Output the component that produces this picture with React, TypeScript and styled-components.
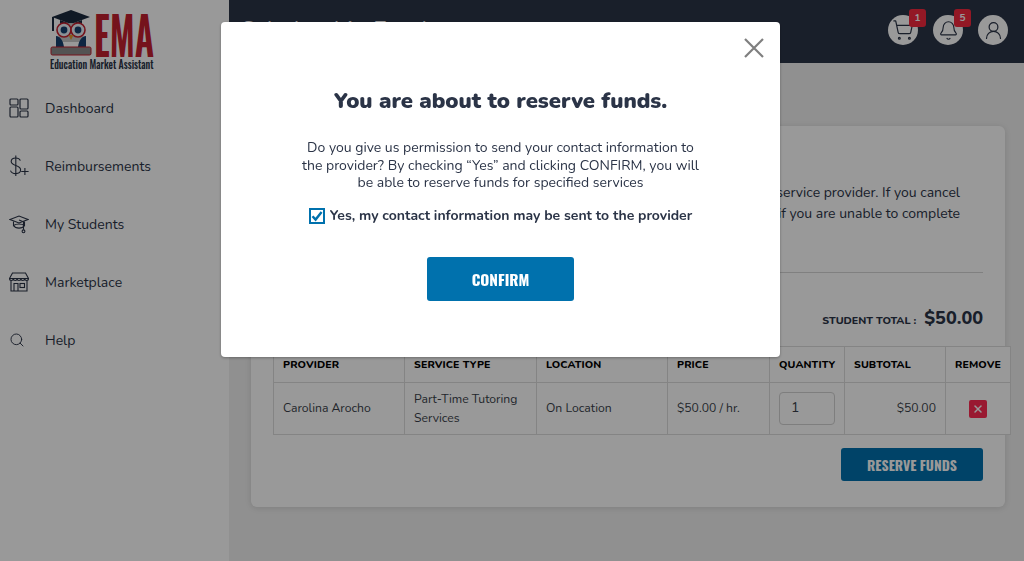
import React from "react";
import styled, { createGlobalStyle } from "styled-components";
import { Bell, Search, ShoppingCart, UserRound, X } from "lucide-react";

const BODY_FONT = `"Nunito", "Lato", "Noto Sans", sans-serif`;
const NARROW_FONT = `"Oswald", "Liberation Sans Narrow", "Liberation Sans", sans-serif`;

const GlobalStyle = createGlobalStyle`
  html, body {
    margin: 0;
    padding: 0;
    height: 100%;
    overflow: hidden;
    font-family: ${BODY_FONT};
    color: #2b3447;
  }
  * {
    box-sizing: border-box;
  }
`;

const DashboardIcon = () => (
  <svg width="20" height="20" viewBox="0 0 20 20" fill="none" stroke="#2b3447" strokeWidth="1.2">
    <rect x="1" y="1" width="8" height="6" rx="1" />
    <rect x="1" y="9" width="8" height="10" rx="1" />
    <rect x="11" y="1" width="8" height="10" rx="1" />
    <rect x="11" y="13" width="8" height="6" rx="1" />
  </svg>
);

const DollarPlusIcon = () => (
  <svg width="20" height="22" viewBox="0 0 20 22" fill="none" stroke="#2b3447" strokeWidth="1.1">
    <path d="M11.4 5.6C10.6 3.8 8.8 3 6.8 3 4.2 3 2.2 4.3 2.2 6.6c0 4.9 9.4 2.9 9.4 8.2 0 2.4-2.2 3.8-4.9 3.8-2.4 0-4.4-1-5.2-3" />
    <path d="M6.8 .5v20.5" />
    <path d="M12.2 16.5h7.4M15.9 13v7" />
  </svg>
);

const CapIcon = () => (
  <svg width="20" height="20" viewBox="0 0 20 20" fill="none" stroke="#2b3447" strokeWidth="1.1">
    <path d="M1 5.5 10 2l9 3.5L10 9z" />
    <path d="M4.5 7.5v4c3-2 8-2 11 0v-4" />
    <path d="M4.5 11.5c1 1.6 3 2.6 5.5 2.6s4.500-1 5.500-2.600" />
    <path d="M10 6l4.500 1.800v8" />
    <circle cx="14.500" cy="17.300" r="1.400" />
  </svg>
);

const StoreIcon = () => (
  <svg width="20" height="20" viewBox="0 0 20 20" fill="none" stroke="#2b3447" strokeWidth="1.1">
    <path d="M3.500 1h13L19.500 6.500H.5z" />
    <path d="M.5 6.500c0 2.600 3.800 2.600 3.800 0 0 2.600 3.800 2.600 3.800 0 0 2.600 3.800 2.600 3.800 0 0 2.600 3.800 2.600 3.800 0 0 2.600 3.800 2.600 3.800 0" />
    <path d="M2 9v10h16V9" />
    <path d="M5 19v-7.500h4V19" />
    <rect x="11" y="11.500" width="4.500" height="4" />
  </svg>
);

const OwlLogo = () => (
  <svg width="42" height="52" viewBox="0 0 42 52">
    <path d="M2 13 21 6l19 7-19 7z" fill="#1c2a3f" />
    <path d="M10 16v6c6-3 16-3 22 0v-6l-11 4z" fill="#1c2a3f" />
    <path d="M3 13v14" stroke="#1c2a3f" strokeWidth="2" />
    <path d="M9 22c7-4 17-4 24 0v16H9z" fill="#c9c9c9" />
    <path d="M6 32c4 0 7 4 8 11H6zM36 32c-4 0-7 4-8 11h8z" fill="#16406f" />
    <circle cx="14" cy="26" r="7" fill="#eaf2f8" stroke="#c4202f" strokeWidth="1.6" />
    <circle cx="28" cy="26" r="7" fill="#eaf2f8" stroke="#c4202f" strokeWidth="1.6" />
    <circle cx="14" cy="26" r="3.4" fill="#16406f" />
    <circle cx="28" cy="26" r="3.4" fill="#16406f" />
    <path d="M18.5 31h5L21 36z" fill="#e39a2d" />
    <rect x="1" y="43" width="40" height="8" rx="1.5" fill="#8b8b8b" stroke="#c4202f" strokeWidth="1" />
  </svg>
);

const NAV_ITEMS = [
  { label: "Dashboard", icon: <DashboardIcon /> },
  { label: "Reimbursements", icon: <DollarPlusIcon /> },
  { label: "My Students", icon: <CapIcon /> },
  { label: "Marketplace", icon: <StoreIcon /> },
  { label: "Help", icon: <Search size={16} strokeWidth={1.4} /> },
];

const App: React.FC = () => {
  return (
    <Page>
      <GlobalStyle />
      <Sidebar>
        <Logo>
          <LogoTop>
            <OwlLogo />
            <LogoLetters>EMA</LogoLetters>
          </LogoTop>
          <LogoTagline>Education Market Assistant</LogoTagline>
        </Logo>
        <Nav>
          {NAV_ITEMS.map((item) => (
            <NavItem key={item.label}>
              <NavIcon>{item.icon}</NavIcon>
              {item.label}
            </NavItem>
          ))}
        </Nav>
      </Sidebar>

      <Main>
        <Header>
          <HeaderTitle>Scholarship Funds</HeaderTitle>
          <HeaderIcons>
            <RoundIcon>
              <ShoppingCart size={22} strokeWidth={1.3} />
              <CountBadge>1</CountBadge>
            </RoundIcon>
            <RoundIcon>
              <Bell size={21} strokeWidth={1.3} />
              <CountBadge>5</CountBadge>
            </RoundIcon>
            <RoundIcon>
              <UserRound size={21} strokeWidth={1.4} />
            </RoundIcon>
          </HeaderIcons>
        </Header>

        <Card>
          <CardTitle>Reservation Details</CardTitle>
          <CardText>
            Funds are held once you send this reservation to your service provider. If you cancel
            <br />
            the reservation the funds are returned to your account if you are unable to complete
          </CardText>
          <CardTextEnd>the service.</CardTextEnd>
          <Divider />
          <TotalRow>
            <TotalLabel>STUDENT TOTAL :</TotalLabel>
            <TotalValue>$50.00</TotalValue>
          </TotalRow>
          <CartTable>
            <colgroup>
              <col width="131" />
              <col width="132" />
              <col width="131" />
              <col width="102" />
              <col width="75" />
              <col width="101" />
              <col width="65" />
            </colgroup>
            <thead>
              <tr>
                <HeadCell>Provider</HeadCell>
                <HeadCell>Service Type</HeadCell>
                <HeadCell>Location</HeadCell>
                <HeadCell>Price</HeadCell>
                <HeadCell>Quantity</HeadCell>
                <HeadCell>Subtotal</HeadCell>
                <HeadCell>Remove</HeadCell>
              </tr>
            </thead>
            <tbody>
              <tr>
                <BodyCell>Carolina Arocho</BodyCell>
                <BodyCell>Part-Time Tutoring Services</BodyCell>
                <BodyCell>On Location</BodyCell>
                <BodyCell>$50.00 / hr.</BodyCell>
                <BodyCell>
                  <QuantityBox>1</QuantityBox>
                </BodyCell>
                <BodyCell $right>$50.00</BodyCell>
                <BodyCell $center>
                  <RemoveButton>
                    <X size={12} strokeWidth={3} />
                  </RemoveButton>
                </BodyCell>
              </tr>
            </tbody>
          </CartTable>
          <CardActions>
            <ReserveButton>RESERVE FUNDS</ReserveButton>
          </CardActions>
        </Card>
      </Main>

      <Overlay>
        <Modal>
          <CloseButton>
            <svg width="20" height="20" viewBox="0 0 20 20" stroke="#7f7f7f" strokeWidth="2.2">
              <path d="M1 1l18 18M19 1 1 19" />
            </svg>
          </CloseButton>
          <ModalTitle>You are about to reserve funds.</ModalTitle>
          <ModalText>
            Do you give us permission to send your contact information to the provider? By checking
            “Yes” and clicking CONFIRM, you will be able to reserve funds for specified services
          </ModalText>
          <ConsentRow>
            <CheckBox>
              <svg width="12" height="12" viewBox="0 0 12 12" fill="none" stroke="#0071ad" strokeWidth="2.4">
                <path d="M1.500 6.200 4.600 9.600 10.600 2" />
              </svg>
            </CheckBox>
            Yes, my contact information may be sent to the provider
          </ConsentRow>
          <ConfirmButton>CONFIRM</ConfirmButton>
        </Modal>
      </Overlay>
    </Page>
  );
};

export default App;

const Page = styled.div`
  display: grid;
  grid-template-columns: 229px 1fr;
  width: 1024px;
  height: 561px;
  overflow: hidden;
`;

const Sidebar = styled.aside`
  display: flex;
  flex-direction: column;
  background-color: #fff;
`;

const Logo = styled.div`
  display: flex;
  flex-direction: column;
  width: 104px;
  margin: 4px 0 0 50px;
`;

const LogoTop = styled.div`
  display: flex;
  align-items: flex-end;
  gap: 2px;
  height: 52px;

  svg {
    flex-shrink: 0;
  }
`;

const LogoLetters = styled.div`
  font-family: ${NARROW_FONT};
  font-weight: 600;
  font-size: 36px;
  line-height: 30px;
  color: #c4202f;
  transform: scaleY(1.45);
  transform-origin: bottom left;
`;

const LogoTagline = styled.div`
  margin-top: 1px;
  font-family: ${NARROW_FONT};
  font-weight: 500;
  font-size: 9.9px;
  line-height: 13px;
  white-space: nowrap;
  color: #2b3447;
  transform: scaleY(1.2);
`;

const Nav = styled.nav`
  display: flex;
  flex-direction: column;
  gap: 38px;
  margin-top: 28px;
  padding-left: 9px;
`;

const NavItem = styled.div`
  display: flex;
  align-items: center;
  gap: 16px;
  height: 20px;
  font-size: 14px;
  color: #2b3447;
`;

const NavIcon = styled.span`
  display: flex;
  align-items: center;
  width: 20px;
  color: #2b3447;
`;

const Main = styled.main`
  display: flex;
  flex-direction: column;
  background-color: #f0f0f0;
`;

const Header = styled.header`
  display: flex;
  align-items: center;
  justify-content: space-between;
  height: 63px;
  padding: 0 16px 3px 12px;
  background-color: #2b3447;
`;

const HeaderTitle = styled.h1`
  margin: 0;
  font-size: 24px;
  font-weight: 400;
  color: #fff;
`;

const HeaderIcons = styled.div`
  display: flex;
  gap: 15px;
`;

const RoundIcon = styled.div`
  position: relative;
  display: flex;
  align-items: center;
  justify-content: center;
  width: 30px;
  height: 30px;
  border-radius: 50%;
  background-color: #fff;
  color: #2b3447;
`;

const CountBadge = styled.span`
  position: absolute;
  top: -6px;
  right: -8px;
  display: flex;
  align-items: center;
  justify-content: center;
  width: 17px;
  height: 18px;
  border-radius: 3px;
  background-color: #f5283f;
  font-size: 10px;
  font-weight: 700;
  color: #fff;
`;

const Card = styled.section`
  display: flex;
  flex-direction: column;
  width: 754px;
  height: 381px;
  margin: 63px 0 0 22px;
  padding: 0 22px;
  border-radius: 6px;
  background-color: #fff;
  box-shadow: 0 1px 6px rgba(0, 0, 0, 0.12);
`;

const CardTitle = styled.h2`
  margin: 18px 0 0;
  font-size: 16px;
  line-height: 22px;
`;

const CardText = styled.p`
  margin: 16px 0 0;
  padding-right: 23px;
  font-size: 14px;
  line-height: 21px;
  text-align: right;
  white-space: nowrap;
`;

const CardTextEnd = styled.p`
  margin: 0;
  font-size: 14px;
  line-height: 21px;
`;

const Divider = styled.hr`
  width: 100%;
  margin: 27px 0 0;
  border: 0;
  border-top: 1px solid #d6d6d6;
`;

const TotalRow = styled.div`
  display: flex;
  align-items: baseline;
  justify-content: flex-end;
  gap: 8px;
  margin-top: 33px;
  height: 24px;
`;

const TotalLabel = styled.span`
  font-size: 10.7px;
  font-weight: 800;
`;

const TotalValue = styled.span`
  font-size: 18px;
  font-weight: 800;
`;

const CartTable = styled.table`
  width: 737px;
  margin-top: 16px;
  border-collapse: collapse;
  table-layout: fixed;
  background-color: #fff;
  flex-shrink: 0;
`;

const HeadCell = styled.th`
  height: 36px;
  padding: 0 9px;
  border: 1px solid #dcdcdc;
  font-size: 10.6px;
  font-weight: 800;
  letter-spacing: 0.1px;
  text-align: left;
  text-transform: uppercase;
  white-space: nowrap;
  color: #000;
`;

const BodyCell = styled.td<{ $right?: boolean; $center?: boolean }>`
  height: 52px;
  padding: 0 9px;
  border: 1px solid #dcdcdc;
  font-size: 12.2px;
  line-height: 18.5px;
  text-align: ${(p) => (p.$right ? "right" : p.$center ? "center" : "left")};
  color: #3a3f4a;
`;

const QuantityBox = styled.div`
  display: flex;
  align-items: center;
  width: 56px;
  height: 33px;
  padding-left: 11px;
  border: 1px solid #d2d2d2;
  border-radius: 4px;
  font-size: 14px;
`;

const RemoveButton = styled.span`
  display: inline-flex;
  align-items: center;
  justify-content: center;
  width: 18px;
  height: 18px;
  margin-top: 1px;
  vertical-align: middle;
  border-radius: 2px;
  background-color: #ff2b53;
  color: #fff;
`;

const CardActions = styled.div`
  display: flex;
  justify-content: flex-end;
  margin-top: 13px;
`;

const ReserveButton = styled.div`
  display: flex;
  align-items: center;
  justify-content: center;
  width: 142px;
  height: 33px;
  border-radius: 3px;
  background-color: #0071ad;
  font-family: ${NARROW_FONT};
  font-size: 13.8px;
  font-weight: 700;
  color: #fff;
`;

const Overlay = styled.div`
  position: fixed;
  inset: 0;
  background-color: rgba(0, 0, 0, 0.4);
`;

const Modal = styled.div`
  position: absolute;
  top: 22px;
  left: 221px;
  display: flex;
  flex-direction: column;
  align-items: center;
  width: 559px;
  height: 335px;
  padding-top: 65px;
  border-radius: 4px;
  background-color: #fff;
  box-shadow: 0 1px 3px rgba(0, 0, 0, 0.3);
`;

const CloseButton = styled.div`
  position: absolute;
  top: 16px;
  right: 16px;
  display: flex;
`;

const ModalTitle = styled.h2`
  margin: 0;
  font-size: 22px;
  line-height: 28px;
  font-weight: 900;
  color: #2b3447;
`;

const ModalText = styled.p`
  width: 410px;
  margin: 24px 0 0;
  font-size: 14px;
  line-height: 17.5px;
  text-align: center;
  color: #2b3447;
`;

const ConsentRow = styled.label`
  display: flex;
  align-items: center;
  gap: 5px;
  margin-top: 15px;
  height: 18px;
  font-size: 14px;
  font-weight: 700;
  color: #2b3447;
`;

const CheckBox = styled.span`
  display: flex;
  align-items: center;
  justify-content: center;
  width: 16px;
  height: 16px;
  border: 2px solid #0071ad;
`;

const ConfirmButton = styled.div`
  display: flex;
  align-items: center;
  justify-content: center;
  width: 147px;
  height: 44px;
  margin-top: 32px;
  border-radius: 3px;
  background-color: #0071ad;
  font-family: ${NARROW_FONT};
  font-size: 15.4px;
  font-weight: 700;
  color: #fff;
`;
